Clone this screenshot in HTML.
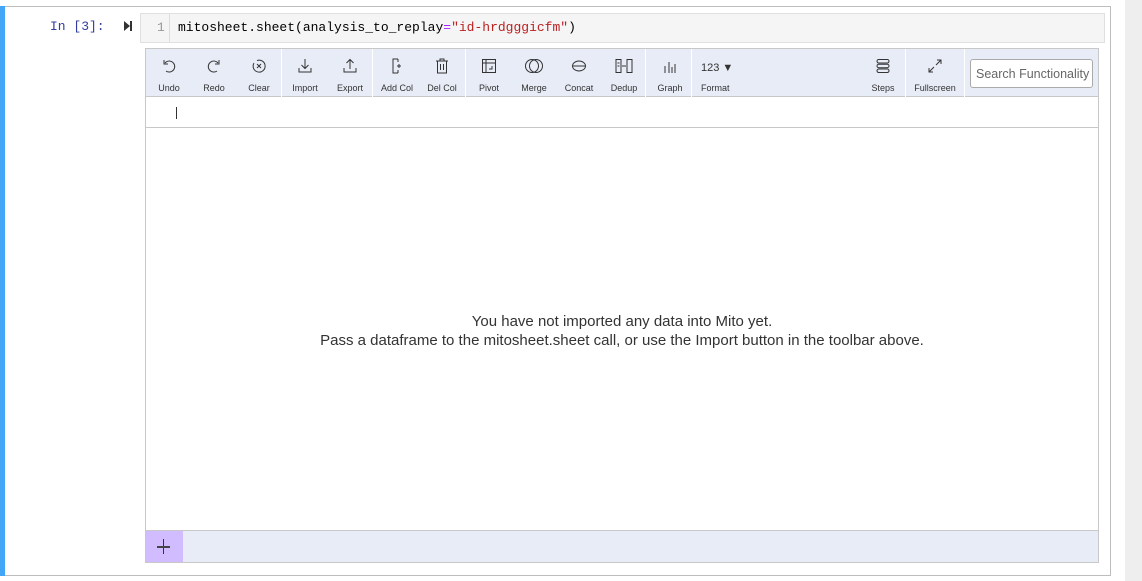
<!DOCTYPE html>
<html><head><meta charset="utf-8"><style>
*{box-sizing:border-box;margin:0;padding:0}
body{width:1142px;height:581px;background:#fff;position:relative;overflow:hidden;font-family:"Liberation Sans",sans-serif}
.abs{position:absolute}
.btn{position:absolute;top:0;height:48px;width:46px;text-align:center;font-size:9px;color:#333}
.btn svg{position:absolute;left:50%;top:9px;transform:translateX(-50%)}
.btn span{position:absolute;left:-10px;right:-10px;top:34px;text-align:center}
.sep{position:absolute;top:0;width:1px;height:48px;background:#fff}
</style></head><body>
<div class="abs" style="left:0;top:6px;width:5px;height:570px;background:#42a5f5"></div>
<div class="abs" style="left:5px;top:6px;width:1106px;height:570px;border:1px solid #bdbdbd;border-left:none"></div>
<div class="abs" style="left:1125px;top:0;width:17px;height:581px;background:#eee"></div>
<div class="abs" style="left:50px;top:19px;font-family:'Liberation Mono',monospace;font-size:13px;color:#303f9f">In [3]:</div>
<svg class="abs" style="left:123px;top:20px" width="10" height="12"><path d="M1 1 L7 6 L1 11Z" fill="#333"/><rect x="7" y="1" width="2" height="10" fill="#333"/></svg>
<div class="abs" style="left:140px;top:13px;width:965px;height:30px;background:#f5f5f5;border:1px solid #e0e0e0"></div>
<div class="abs" style="left:140px;top:14px;width:30px;height:28px;border-right:1px solid #ddd"></div>
<div class="abs" style="left:157px;top:20px;font-family:'Liberation Mono',monospace;font-size:13px;color:#999">1</div>
<div class="abs" style="left:178px;top:20px;font-family:'Liberation Mono',monospace;font-size:13px;color:#000">mitosheet.sheet(analysis_to_replay<span style="color:#aa22ff">=</span><span style="color:#ba2121">"id-hrdgggicfm"</span>)</div>

<div class="abs" style="left:145px;top:48px;width:954px;height:515px;border:1px solid #c8c8c8">
 <div class="abs" style="left:0;top:0;width:952px;height:48px;background:#e8ecf7;border-bottom:1px solid #c8c8c8">
  <div class="sep" style="left:135px"></div><div class="sep" style="left:226px"></div><div class="sep" style="left:319px"></div><div class="sep" style="left:499px"></div><div class="sep" style="left:545px"></div><div class="sep" style="left:759px"></div><div class="sep" style="left:818px"></div>
  <div class="btn" style="left:0px"><svg width="16" height="16" fill="none" stroke="#333" stroke-width="1"><path d="M4 5 A5.5 5.5 0 1 1 5 13"/><path d="M3 2 V6 H7"/></svg><span>Undo</span></div>
  <div class="btn" style="left:45px"><svg width="16" height="16" fill="none" stroke="#333" stroke-width="1"><path d="M12 5 A5.5 5.5 0 1 0 11 13"/><path d="M13 2 V6 H9"/></svg><span>Redo</span></div>
  <div class="btn" style="left:90px"><svg width="16" height="16" fill="none" stroke="#333" stroke-width="1"><path d="M3 5 A6 6 0 1 0 6 2.5"/><path d="M6 6 L10 10 M10 6 L6 10"/></svg><span>Clear</span></div>
  <div class="btn" style="left:136px"><svg width="16" height="16" fill="none" stroke="#333" stroke-width="1"><path d="M8 1 V10 M4.5 7 L8 10.5 L11.5 7 M2 10 V14 H14 V10"/></svg><span>Import</span></div>
  <div class="btn" style="left:181px"><svg width="16" height="16" fill="none" stroke="#333" stroke-width="1"><path d="M8 11 V2 M4.5 5 L8 1.5 L11.5 5 M2 10 V14 H14 V10"/></svg><span>Export</span></div>
  <div class="btn" style="left:228px"><svg width="16" height="16" fill="none" stroke="#333" stroke-width="1"><path d="M9 1 H4 V15 H9 M9 1 V4 M9 12 V15 M8 8 H12 M10 6 V10"/></svg><span>Add Col</span></div>
  <div class="btn" style="left:273px"><svg width="16" height="16" fill="none" stroke="#333" stroke-width="1"><path d="M2 3 H14 M6 3 V1 H10 V3 M3.5 3 V15 H12.5 V3 M6.5 6 V12 M9.5 6 V12"/></svg><span>Del Col</span></div>
  <div class="btn" style="left:320px"><svg width="16" height="16" fill="none" stroke="#333" stroke-width="1"><rect x="1.5" y="1.5" width="13" height="13"/><path d="M1.5 5 H14.5 M5 1.5 V14.5 M8 11 H11 V8"/></svg><span>Pivot</span></div>
  <div class="btn" style="left:365px"><svg width="20" height="16" fill="none" stroke="#333" stroke-width="1"><circle cx="8" cy="8" r="6.5"/><circle cx="12" cy="8" r="6.5"/></svg><span>Merge</span></div>
  <div class="btn" style="left:410px"><svg width="16" height="16" fill="none" stroke="#333" stroke-width="1"><ellipse cx="8" cy="8" rx="6.5" ry="5"/><path d="M1.5 8 H14.5"/></svg><span>Concat</span></div>
  <div class="btn" style="left:455px"><svg width="20" height="16" fill="none" stroke="#333" stroke-width="1"><rect x="2" y="1.5" width="5" height="13"/><rect x="13" y="1.5" width="5" height="13"/><path d="M8 8 H12 M3.5 5 H5.5 M3.5 8 H5.5"/></svg><span>Dedup</span></div>
  <div class="btn" style="left:501px"><svg width="16" height="16" fill="none" stroke="#333" stroke-width="1"><path d="M3 8 V15 M7 4 V15 M10 9 V15 M13 6 V15"/></svg><span>Graph</span></div>
  <div class="btn" style="left:547px;width:46px"><div style="position:absolute;left:8px;top:13px;font-size:11px;color:#333">123 ▼</div><span style="left:0;right:auto;text-align:left;padding-left:8px">Format</span></div>
  <div class="btn" style="left:714px"><svg width="16" height="16" fill="none" stroke="#333" stroke-width="1"><rect x="2" y="1.5" width="12" height="3.5" rx="1.7"/><rect x="2" y="6.2" width="12" height="3.5" rx="1.7"/><rect x="2" y="11" width="12" height="3.5" rx="1.7"/></svg><span>Steps</span></div>
  <div class="btn" style="left:766px"><svg width="16" height="16" fill="none" stroke="#333" stroke-width="1"><path d="M9 7 L14 2 M10 2 H14 V6 M7 9 L2 14 M2 10 V14 H6"/></svg><span>Fullscreen</span></div>
  <div class="abs" style="left:824px;top:10px;width:123px;height:29px;background:#fff;border:1px solid #aaa;border-radius:3px;font-size:12.5px;color:#666;padding:7px 0 0 5px;white-space:nowrap;overflow:hidden">Search Functionality</div>
 </div>
 <div class="abs" style="left:0;top:48px;width:952px;height:31px;border-bottom:1px solid #c8c8c8"></div>
 <div class="abs" style="left:30px;top:58px;width:1px;height:12px;background:#333"></div>
 <div class="abs" style="left:0;top:263px;width:952px;text-align:center;font-size:15px;color:#333;line-height:19px">You have not imported any data into Mito yet.<br>Pass a dataframe to the mitosheet.sheet call, or use the Import button in the toolbar above.</div>
 <div class="abs" style="left:0;top:481px;width:952px;height:32px;background:#e8ecf7;border-top:1px solid #c8c8c8"></div>
 <div class="abs" style="left:0;top:482px;width:37px;height:31px;background:#d0bcff"></div>
 <div class="abs" style="left:17px;top:490px;width:1px;height:15px;background:#333"></div>
 <div class="abs" style="left:11px;top:497px;width:13px;height:2px;background:#444"></div>
</div>
</body></html>
